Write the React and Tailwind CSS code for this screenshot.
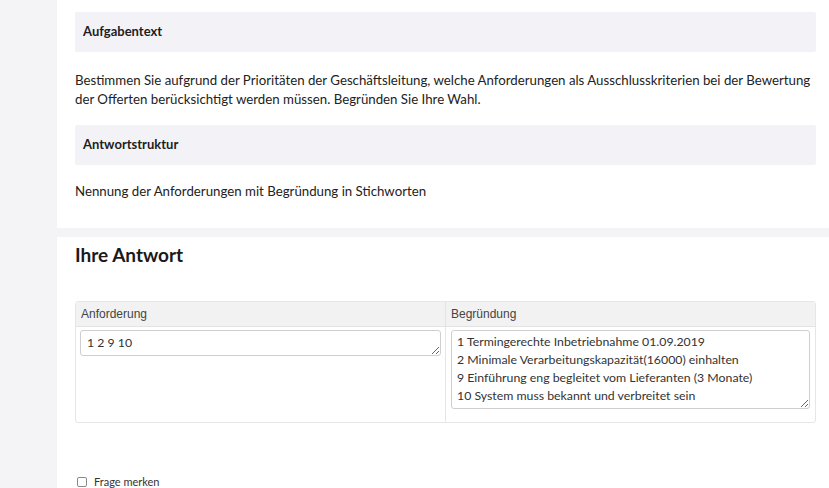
import React from "react";

const LATO = "font-['Lato','Noto_Sans',sans-serif]";

const SectionHead = ({ children }) => (
  <div className="h-[40px] bg-[#f3f3f7] rounded-[2px] flex items-center px-[8px]">
    <h3 className="text-[13px] font-bold text-[#1e1e1e]">{children}</h3>
  </div>
);

const reasons = [
  "1 Termingerechte Inbetriebnahme 01.09.2019",
  "2 Minimale Verarbeitungskapazität(16000) einhalten",
  "9 Einführung eng begleitet vom Lieferanten (3 Monate)",
  "10 System muss bekannt und verbreitet sein",
];

export default function App() {
  return (
    <div className={"w-[829px] h-[488px] overflow-hidden bg-[#f4f4f6] flex text-[#222] " + LATO}>
      {/* left rail */}
      <div className="w-[57px] shrink-0" />

      <div className="flex-1 flex flex-col gap-[9px]">
        {/* task card */}
        <section className="bg-white pl-[18px] pr-[13px] pt-[12px] pb-[27px]">
          <SectionHead>Aufgabentext</SectionHead>
          <p className="mt-[19px] text-[13.25px] leading-[19px]">
            Bestimmen Sie aufgrund der Prioritäten der Geschäftsleitung, welche Anforderungen als
            Ausschlusskriterien bei der Bewertung der Offerten berücksichtigt werden müssen. Begründen
            Sie Ihre Wahl.
          </p>
          <div className="mt-[16px]">
            <SectionHead>Antwortstruktur</SectionHead>
          </div>
          <p className="mt-[17px] text-[13.25px] leading-[19px]">
            Nennung der Anforderungen mit Begründung in Stichworten
          </p>
        </section>

        {/* answer card */}
        <section className="flex-1 bg-white pl-[18px] pr-[13px] pt-[5px]">
          <h2 className="text-[19px] leading-[25px] font-bold text-[#1a1a1a]">Ihre Antwort</h2>

          <div className="mt-[34px] border border-[#e6e6e6] rounded-[3px] overflow-hidden">
            <div className="grid grid-cols-[370px_1fr] bg-[#f2f2f2] border-b border-[#e3e3e3] h-[25px] font-['Liberation_Sans',Arial,sans-serif] text-[12px] text-[#444]">
              <div className="flex items-center px-[5px] border-r border-[#e3e3e3]">Anforderung</div>
              <div className="flex items-center px-[5px]">Begründung</div>
            </div>
            <div className="grid grid-cols-[370px_1fr]">
              <div className="pl-[4px] pr-[4px] pt-[3px] border-r border-[#e6e6e6]">
                <textarea
                  readOnly
                  defaultValue="1 2 9 10"
                  className="block w-full h-[26px] border border-[#cfcfcf] rounded-[3px] px-[6px] pt-[3px] text-[12.3px] leading-[18px] text-[#333] outline-none resize-y"
                />
              </div>
              <div className="pl-[5px] pr-[5px] pt-[3px] pb-[13px]">
                <textarea
                  readOnly
                  defaultValue={reasons.join("\n")}
                  className="block w-full h-[79px] border border-[#cfcfcf] rounded-[3px] px-[5px] pt-[2px] text-[12.3px] leading-[18px] text-[#333] outline-none resize-y overflow-hidden"
                />
              </div>
            </div>
          </div>

          <label className="mt-[52px] flex items-center gap-[7px] pl-[2px] text-[11px] leading-[13px] text-[#333]">
            <span className="w-[10px] h-[10px] border border-[#888] rounded-[2px] bg-white" />
            Frage merken
          </label>
        </section>
      </div>
    </div>
  );
}
